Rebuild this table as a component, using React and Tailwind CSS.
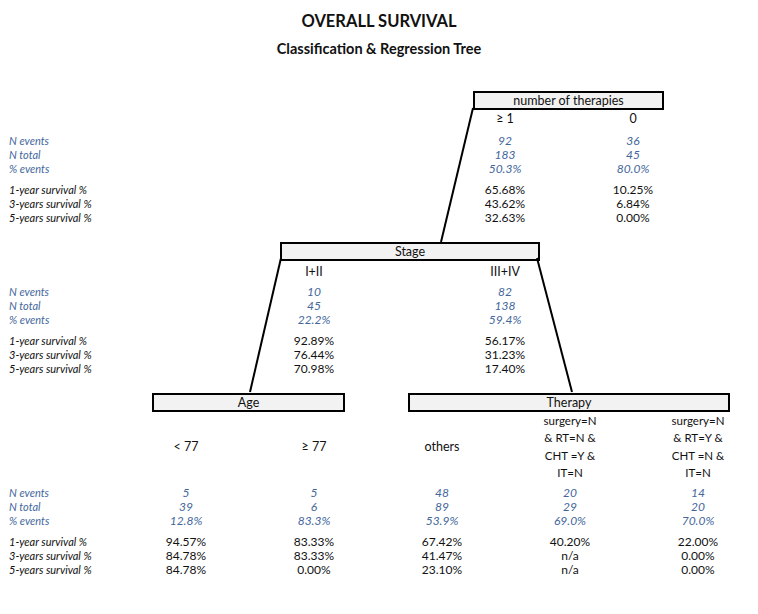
import React from 'react'

const blue = 'text-[#44679b] italic'
const rowCls = 'h-[14px] leading-[14px]'

const SURV_LABELS = ['1-year survival %', '3-years survival %', '5-years survival %']
const COUNT_LABELS = ['N events', 'N total', '% events']

function SplitBox({ label, className }) {
  return (
    <div
      className={`h-[19px] border-2 border-black bg-[#f2f2f2] flex items-center justify-center pt-[1px] text-[12.5px] leading-[14px] text-[#111] ${className}`}
    >
      {label}
    </div>
  )
}

// one block of 3 rows: labels + value columns
function Block({ cols, labels, values, valueCls, labelCls }) {
  return (
    <div className="grid" style={{ gridTemplateColumns: cols }}>
      {labels.map((lab, i) => (
        <React.Fragment key={lab}>
          <div className={`${rowCls} pl-[9px] text-[11px] italic ${labelCls}`}>{lab}</div>
          {values.map((col, j) =>
            col === null ? (
              <div key={j} className={rowCls} />
            ) : (
              <div key={j} className={`${rowCls} text-center text-[12px] ${valueCls}`}>
                {col[i]}
              </div>
            )
          )}
        </React.Fragment>
      ))}
    </div>
  )
}

function Section({ cols, counts, surv }) {
  return (
    <>
      <div className="mt-[7px]">
        <Block cols={cols} labels={COUNT_LABELS} values={counts} valueCls={blue} labelCls="text-[#44679b]" />
      </div>
      <div className="mt-[7px]">
        <Block cols={cols} labels={SURV_LABELS} values={surv} valueCls="text-[#111]" labelCls="text-[#111]" />
      </div>
    </>
  )
}

export default function App() {
  return (
    <div
      className="relative w-[758px] h-[614px] bg-white text-[#111] overflow-hidden"
      style={{ fontFamily: 'Lato, "Open Sans", sans-serif' }}
    >
      {/* connector lines of the tree */}
      <svg className="absolute inset-0 pointer-events-none" width="758" height="614">
        <line x1="473" y1="108" x2="441" y2="242" stroke="#000" strokeWidth="2" />
        <line x1="281" y1="258" x2="250" y2="392" stroke="#000" strokeWidth="2" />
        <line x1="537" y1="258" x2="572" y2="392" stroke="#000" strokeWidth="2" />
      </svg>

      <div className="pt-[11px] h-[31px] leading-[20px] text-center font-bold text-[16.5px]">OVERALL SURVIVAL</div>
      <div className="mt-[8px] h-[20px] leading-[20px] text-center font-bold text-[14.5px]">Classification &amp; Regression Tree</div>

      {/* number of therapies */}
      <div className="mt-[32px] flex">
        <SplitBox label="number of therapies" className="ml-[473px] w-[191px] h-[18px]" />
      </div>
      <div className="grid grid-cols-[441px_128px_128px] h-[17px] leading-[17px] text-[12.5px]">
        <div />
        <div className="text-center">≥ 1</div>
        <div className="text-center">0</div>
      </div>
      <Section
        cols="441px 128px 128px"
        counts={[['92', '183', '50.3%'], ['36', '45', '80.0%']]}
        surv={[['65.68%', '43.62%', '32.63%'], ['10.25%', '6.84%', '0.00%']]}
      />

      {/* Stage */}
      <div className="mt-[17px] flex">
        <SplitBox label="Stage" className="ml-[280px] w-[260px] h-[18px]" />
      </div>
      <div className="mt-[3px] grid grid-cols-[250px_128px_63px_128px] h-[16px] leading-[16px] text-[12.5px]">
        <div />
        <div className="text-center">I+II</div>
        <div />
        <div className="text-center">III+IV</div>
      </div>
      <div className="-mt-[2px]">
        <Section
          cols="250px 128px 63px 128px"
          counts={[['10', '45', '22.2%'], null, ['82', '138', '59.4%']]}
          surv={[['92.89%', '76.44%', '70.98%'], null, ['56.17%', '31.23%', '17.40%']]}
        />
      </div>

      {/* Age / Therapy */}
      <div className="mt-[17px] flex">
        <SplitBox label="Age" className="ml-[152px] w-[193px]" />
        <SplitBox label="Therapy" className="ml-[63px] w-[322px]" />
      </div>
      <div className="grid grid-cols-[122px_128px_128px_128px_128px_128px] items-center text-[12.5px] leading-[17.3px]">
        <div />
        <div className="text-center">&lt; 77</div>
        <div className="text-center">≥ 77</div>
        <div className="text-center">others</div>
        <div className="text-center text-[11.5px]">
          surgery=N
          <br />
          &amp; RT=N &amp;
          <br />
          CHT =Y &amp;
          <br />
          IT=N
        </div>
        <div className="text-center text-[11.5px]">
          surgery=N
          <br />
          &amp; RT=Y &amp;
          <br />
          CHT =N &amp;
          <br />
          IT=N
        </div>
      </div>
      <div className="-mt-[2px]">
        <Section
          cols="122px 128px 128px 128px 128px 128px"
          counts={[
            ['5', '39', '12.8%'],
            ['5', '6', '83.3%'],
            ['48', '89', '53.9%'],
            ['20', '29', '69.0%'],
            ['14', '20', '70.0%'],
          ]}
          surv={[
            ['94.57%', '84.78%', '84.78%'],
            ['83.33%', '83.33%', '0.00%'],
            ['67.42%', '41.47%', '23.10%'],
            ['40.20%', 'n/a', 'n/a'],
            ['22.00%', '0.00%', '0.00%'],
          ]}
        />
      </div>
    </div>
  )
}
